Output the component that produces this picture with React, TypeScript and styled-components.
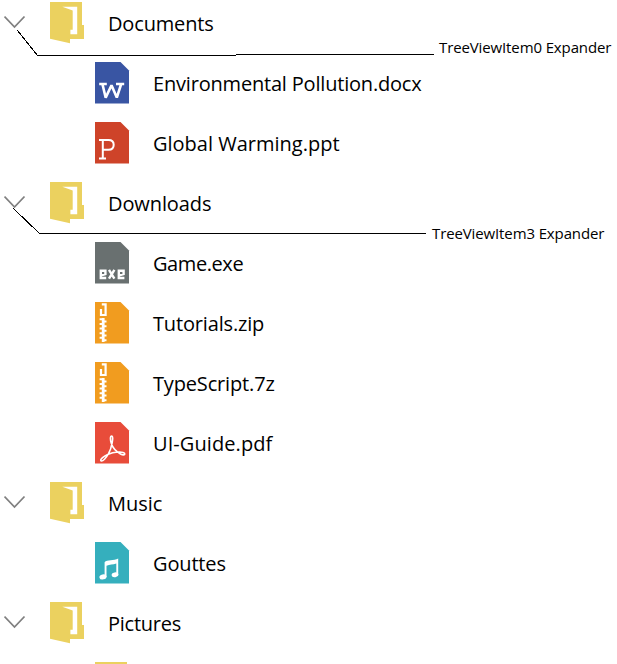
import React from "react";
import styled, { createGlobalStyle } from "styled-components";

const GlobalStyle = createGlobalStyle`
  html, body { margin: 0; background: #fff; overflow: hidden; }
`;

const Page = styled.main`
  position: relative;
  width: 617px;
  height: 664px;
  overflow: hidden;
  background: #fff;
  font-family: "Open Sans", "Noto Sans", sans-serif;
  color: #000;
`;

const Tree = styled.ul`
  list-style: none;
  margin: -7px 0 0;
  padding: 0;
`;

const Row = styled.li<{ $level: number }>`
  display: flex;
  align-items: center;
  box-sizing: border-box;
  height: 60px;
  padding-left: ${(p) => (p.$level === 0 ? 4 : 95)}px;
`;

const Chevron = styled.svg`
  display: block;
  flex: none;
  width: 22px;
  height: 14px;
  margin-right: 24px;
  margin-top: -2px;
`;

const Icon = styled.svg`
  display: block;
  flex: none;
  width: 35px;
  height: 42px;
`;

const Label = styled.span<{ $spacing: number }>`
  margin-left: 23px;
  padding-top: 2px;
  font-size: 20px;
  line-height: 28px;
  letter-spacing: ${(p) => p.$spacing}px;
  white-space: nowrap;
`;

const Leaders = styled.svg`
  position: absolute;
  left: 0;
  top: 0;
  pointer-events: none;
`;

const Callout = styled.span<{ $x: number; $y: number }>`
  position: absolute;
  left: ${(p) => p.$x}px;
  top: ${(p) => p.$y}px;
  font-size: 15px;
  line-height: 20px;
  letter-spacing: -0.12px;
  white-space: nowrap;
`;

type Kind = "folder" | "word" | "ppt" | "exe" | "zip" | "pdf" | "music";

const fills: Record<Kind, string> = {
  folder: "#ebd15f",
  word: "#3955a3",
  ppt: "#ce4329",
  exe: "#697070",
  zip: "#f19c1f",
  pdf: "#e84c3a",
  music: "#35afbd",
};

function Glyph({ kind }: { kind: Kind }) {
  switch (kind) {
    case "word":
      return (
        <path d="M4.2 22h7.6M21 22h8.2M7.4 22l3.3 13.6 5.8-12.4L21.8 35.6 26.2 22" fill="none" stroke="#fff" strokeWidth="2.6" strokeLinejoin="bevel" />
      );
    case "ppt":
      return (
        <path d="M4 18h9.5c3.6 0 5.2 2 5.2 4.8s-1.8 5-5.2 5H7.8M7.8 18v18.4M4 36.4h7" fill="none" stroke="#fff" strokeWidth="2" />
      );
    case "exe":
      return (
        <path d="M11.2 36H5.8v-7.2h4.6v3.2L6 33.4M14 27.8l5.4 8.9M19.4 27.8l-5.4 8.9M29.4 36h-5.6v-7.2h4.8v3.2l-4.6 1.4" fill="none" stroke="#fff" strokeWidth="2.4" />
      );
    case "zip":
      return (
        <g fill="none" stroke="#fff">
          <path d="M6.8 2.4h3.8V13H6V7" strokeWidth="2.2" />
          <path d="M8.2 16v24" strokeWidth="2.8" />
          <path d="M4.6 17.2h3.6M4.6 22h3.6M4.6 26.6h3.6M4.6 31.2h3.6M4.6 35.8h3.6M8 19.5h3.5M8 24.2h3.5M8 28.8h3.5M8 33.4h3.5M8 38.2h3.5" strokeWidth="2" />
        </g>
      );
    case "pdf":
      return (
        <path d="M16.8 14c-2 0-1.4 4.2-.6 7 1.2 4.2 5.2 8.6 9.3 11 3.3 1.7 4.8.7 4-.7-1.7-2.4-11-1.3-16.3 1-4.3 1.9-8.3 4.7-7.3 6.4 1.5 1.4 5.5-3 7.7-7.2 2.9-5.2 5.5-17.5 3.2-17.5Z" fill="none" stroke="#fff" strokeWidth="1.6" strokeLinejoin="round" />
      );
    case "music":
      return (
        <g fill="#fff">
          <ellipse cx="8" cy="34.9" rx="3.6" ry="2.5" transform="rotate(-12 8 34.9)" />
          <ellipse cx="20" cy="32.8" rx="3.4" ry="2.4" transform="rotate(-12 20 32.8)" />
          <path d="M9.6 20.2c2.4-2.6 9.4-1 13.6-3.6v16.6h-1.9V21.6c-3.4 1.6-6.6.6-9.8 2.2v11.3H9.6Z" />
        </g>
      );
    default:
      return null;
  }
}

function FileIcon({ kind }: { kind: Kind }) {
  if (kind === "folder") {
    return (
      <Icon viewBox="0 0 35 42" aria-hidden="true">
        <path d="M0 0h32v23h2v14H20v4.2L0 36.7Z" fill={fills.folder} />
        <path d="M12.3 4.8h14.9v27.5h-6.8v-4.6h2.3V8.6Z" fill="#fff" />
      </Icon>
    );
  }
  return (
    <Icon viewBox="0 0 35 42" aria-hidden="true">
      <path d="M0 0h25.5L34 8.5v33H0Z" fill={fills[kind]} />
      <Glyph kind={kind} />
    </Icon>
  );
}

const items: { label: string; kind: Kind; level: number; spacing: number }[] = [
  { label: "Documents", kind: "folder", level: 0, spacing: -0.16 },
  { label: "Environmental Pollution.docx", kind: "word", level: 1, spacing: -0.19 },
  { label: "Global Warming.ppt", kind: "ppt", level: 1, spacing: 0 },
  { label: "Downloads", kind: "folder", level: 0, spacing: -0.1 },
  { label: "Game.exe", kind: "exe", level: 1, spacing: -0.42 },
  { label: "Tutorials.zip", kind: "zip", level: 1, spacing: -0.16 },
  { label: "TypeScript.7z", kind: "zip", level: 1, spacing: -0.16 },
  { label: "UI-Guide.pdf", kind: "pdf", level: 1, spacing: 0.08 },
  { label: "Music", kind: "folder", level: 0, spacing: 0 },
  { label: "Gouttes", kind: "music", level: 1, spacing: -0.15 },
  { label: "Pictures", kind: "folder", level: 0, spacing: -0.25 },
  { label: "", kind: "folder", level: 1, spacing: 0 },
];

export default function App() {
  return (
    <Page>
      <GlobalStyle />
      <Tree>
        {items.map((item, i) => (
          <Row key={i} $level={item.level}>
            {item.level === 0 && (
              <Chevron viewBox="0 0 22 14" aria-hidden="true">
                <path d="M.5 1.5 10.5 12l10-10.5" fill="none" stroke="#808080" strokeWidth="1.8" />
              </Chevron>
            )}
            <FileIcon kind={item.kind} />
            <Label $spacing={item.spacing}>{item.label}</Label>
          </Row>
        ))}
      </Tree>
      <Leaders width="617" height="260" aria-hidden="true">
        <g fill="none" stroke="#000" shapeRendering="crispEdges">
          <path d="M17.5 30.5 37.5 55.5H236M236 54.5H434" />
          <path d="M13.5 208.5 39.5 233.5H426" />
        </g>
      </Leaders>
      <Callout $x={439} $y={37}>TreeViewItem0 Expander</Callout>
      <Callout $x={432} $y={223}>TreeViewItem3 Expander</Callout>
    </Page>
  );
}
